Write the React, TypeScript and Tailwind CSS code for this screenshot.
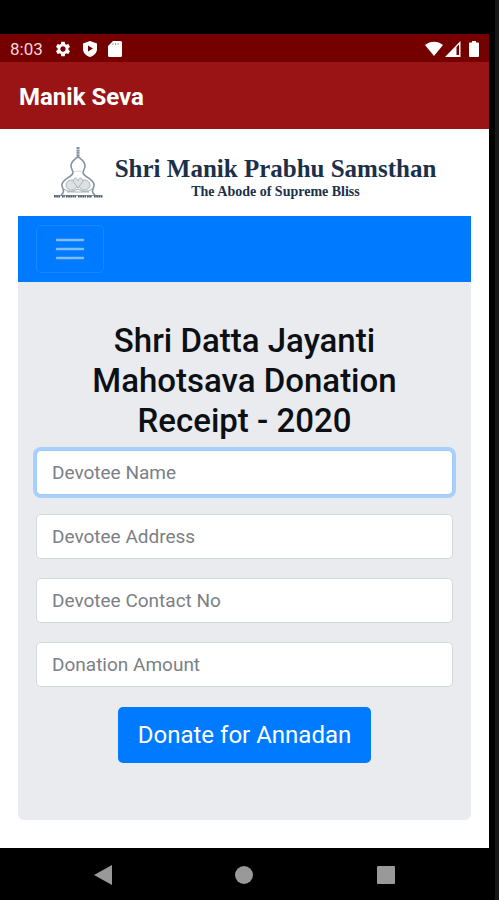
import React from "react";
import { MdSettings } from "react-icons/md";

const fields = [
  { id: "name", label: "Devotee Name", type: "text" },
  { id: "address", label: "Devotee Address", type: "text" },
  { id: "contact", label: "Devotee Contact No", type: "tel" },
  { id: "amount", label: "Donation Amount", type: "text" },
];

const StatusBar = () => (
  <div className="flex h-7 items-center justify-between bg-[#750000] px-2.5 pt-0.5 text-white">
    <div className="flex items-center gap-[11px]">
      <span className="text-[17px] leading-5 text-[#f3dada]">8:03</span>
      <MdSettings className="size-[18px]" />
      <svg className="h-4 w-3.5" viewBox="0 0 14 16" fill="currentColor" fillRule="evenodd">
        <path d="M7 0 14 2.600V8c0 4-3 6.900-7 8-4-1.100-7-4-7-8V2.600ZM5 4.500v6L10 7.500Z" />
      </svg>
      <svg className="h-4 w-3.5" viewBox="0 0 14 16" fill="currentColor" fillRule="evenodd">
        <path d="M5 0h7.500A1.500 1.500 0 0 1 14 1.500v13a1.500 1.500 0 0 1-1.500 1.500h-11A1.500 1.500 0 0 1 0 14.500V5Z" />
        <path d="M5 2v2M7.500 2v2M10 2v2" stroke="#c98a8a" />
      </svg>
    </div>
    <div className="flex items-center gap-0.5">
      <svg className="h-4 w-[18px]" viewBox="0 0 18 16" fill="currentColor">
        <path d="M0 4C5-.5 13-.5 18 4L9 15Z" />
      </svg>
      <svg className="h-4 w-4" viewBox="0 0 16 16" fill="currentColor" fillRule="evenodd">
        <path d="M15.500 0v16H0ZM11.500 6v8h2.500V3.500Z" />
      </svg>
      <svg className="ml-1.5 h-4 w-2.5" viewBox="0 0 10 16" fill="currentColor">
        <path d="M3 0h4v1.500h2a1 1 0 0 1 1 1V15a1 1 0 0 1-1 1H1a1 1 0 0 1-1-1V2.500a1 1 0 0 1 1-1h2Z" />
      </svg>
    </div>
  </div>
);

const TempleMark = () => (
  <svg className="h-[54px] w-[50px]" viewBox="0 0 50 54" fill="none" stroke="#85929c">
    <path d="M25 1v9" strokeWidth="3" strokeDasharray="2 .4" />
    <path
      d="M25 10c-1 3-7 4-7 10 0 3 2 4 2 7-1 4-9 5-11 11-1 4 3 5 1 9l-2 2M25 10c1 3 7 4 7 10 0 3-2 4-2 7 1 4 9 5 11 11 1 4-3 5-1 9l2 2"
      strokeWidth="1.600"
    />
    <path d="M20 26q5-2 10 0" strokeWidth=".6" stroke="#bcc5ca" />
    <g stroke="#aab5b8" fill="#dce2e3">
      <ellipse cx="18.500" cy="39" rx="5.500" ry="5" />
      <ellipse cx="31.500" cy="39" rx="5.500" ry="5" />
      <path d="M20 35c1-4 4-4 5 0 1-4 4-4 5 0l-5 7Z" />
      <path d="M11 43c4 3 9 3 14 0 5 3 10 3 14 0M14 46h22" fill="none" strokeWidth="1.200" />
    </g>
    <path d="M1 50.500h6m2 0h3m1 0h10m2 0h8m1 0h5m2 0h9" stroke="#40536a" strokeWidth="1.800" strokeDasharray="1.700 .5" />
    <path d="M1 49.500h48" stroke="#40536a" strokeWidth=".6" />
  </svg>
);

const DonationForm = () => (
  <form className="rounded-b-md bg-[#e9ebee] px-[18px] pt-[39px] pb-[57px]">
    <h1 className="mx-auto max-w-80 text-center text-[33px] leading-10 font-medium text-[#0c1014]">
      Shri Datta Jayanti Mahotsava Donation Receipt - 2020
    </h1>
    <div className="mt-[9px] flex flex-col gap-[19px]">
      {fields.map((field) => (
        <input
          key={field.id}
          type={field.type}
          name={field.id}
          aria-label={field.label}
          placeholder={field.label}
          autoFocus={field.id === "name"}
          className="h-[45px] w-full rounded-[5px] border border-[#d3d8dd] bg-white px-[15px] text-[19px] caret-transparent outline-none placeholder:text-[#7b8085] focus:border-[#a0cafb] focus:ring-3 focus:ring-[#a9cffb]"
        />
      ))}
    </div>
    <div className="mt-5 flex justify-center">
      <button type="submit" className="rounded-[5px] bg-[#007bff] px-5 py-3 text-2xl text-white">
        Donate for Annadan
      </button>
    </div>
  </form>
);

const App = () => {
  return (
    <div className="flex min-h-screen flex-col border-r-4 border-[#171717] bg-black pt-[34px] pr-1.5 font-['Roboto',sans-serif]">
      <StatusBar />
      <header className="flex h-[67px] items-center bg-[#9b1415] px-[19px] pt-0.5">
        <h2 className="text-2xl font-bold text-white">Manik Seva</h2>
      </header>

      {/* Page content */}
      <main className="grow bg-white px-[18px] pb-7">
        <div className="flex h-[87px] items-center justify-center gap-3">
          <TempleMark />
          <div className="pt-2.5 text-center font-['Liberation_Serif',serif] font-bold text-[#1c304a]">
            <p className="text-[25px] leading-7">Shri Manik Prabhu Samsthan</p>
            <p className="text-sm leading-[18px]">The Abode of Supreme Bliss</p>
          </div>
        </div>
        <nav className="flex h-[66px] items-center bg-[#007bff] px-[18px]">
          <button
            type="button"
            aria-label="Toggle navigation"
            className="flex h-12 w-[68px] items-center justify-center rounded-[5px] border border-[#1786ff]"
          >
            <svg className="h-6 w-[30px]" viewBox="0 0 30 24" stroke="#80bdff" strokeWidth="2.500" strokeLinecap="round">
              <path d="M2 3h26M2 12h26M2 21h26" />
            </svg>
          </button>
        </nav>
        <DonationForm />
      </main>

      {/* System navigation */}
      <div className="flex h-[52px] items-center justify-around px-8 pt-0.5 text-[#999]">
        <button type="button" aria-label="Back">
          <svg className="size-5" viewBox="0 0 20 20" fill="currentColor">
            <path d="M1 10 19 0v20Z" />
          </svg>
        </button>
        <button type="button" aria-label="Home">
          <svg className="size-5" viewBox="0 0 20 20" fill="currentColor">
            <circle cx="10" cy="10" r="9" />
          </svg>
        </button>
        <button type="button" aria-label="Recent apps">
          <svg className="size-5" viewBox="0 0 20 20" fill="currentColor">
            <rect x="1" y="1" width="18" height="18" rx="1" />
          </svg>
        </button>
      </div>
    </div>
  );
};

export default App;
